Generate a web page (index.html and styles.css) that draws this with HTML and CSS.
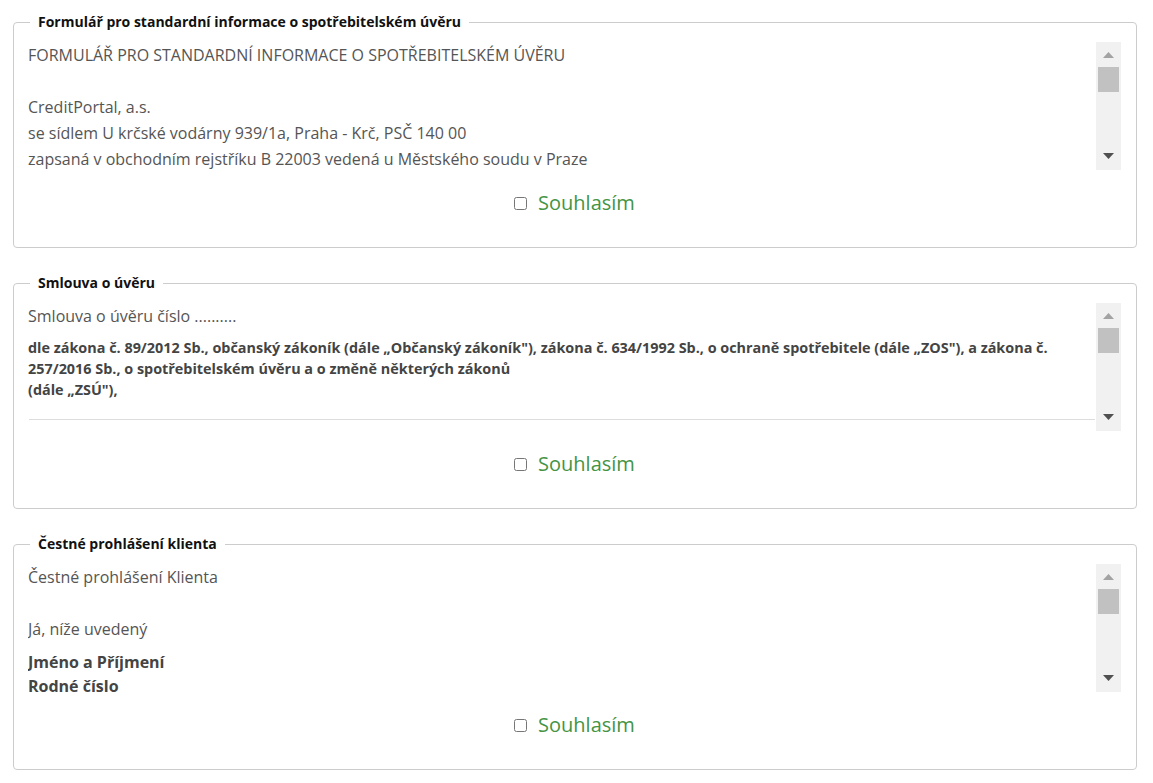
FILE: index.html
```html
<!DOCTYPE html>
<html lang="cs">
<head>
<meta charset="utf-8">
<title>Souhlasy</title>
<link rel="stylesheet" href="styles.css">
</head>
<body>
<main class="page">
  <fieldset class="consent">
    <legend class="consent__title">Formulář pro standardní informace o spotřebitelském úvěru</legend>
    <div class="doc">
      <div class="doc__text">
        <p>FORMULÁŘ PRO STANDARDNÍ INFORMACE O SPOTŘEBITELSKÉM ÚVĚRU</p>
        <p class="blank"></p>
        <p>CreditPortal, a.s.<br>se sídlem U krčské vodárny 939/1a, Praha - Krč, PSČ 140 00<br>zapsaná v obchodním rejstříku B 22003 vedená u Městského soudu v Praze</p>
      </div>
      <div class="scrollbar" aria-hidden="true">
        <span class="scrollbar__btn scrollbar__btn--up"><svg width="11" height="6" viewBox="0 0 11 6"><polygon points="0,6 11,6 5.5,0"/></svg></span>
        <span class="scrollbar__track"><span class="scrollbar__thumb"></span></span>
        <span class="scrollbar__btn scrollbar__btn--down"><svg width="11" height="6" viewBox="0 0 11 6"><polygon points="0,0 11,0 5.5,6"/></svg></span>
      </div>
    </div>
    <label class="agree"><input type="checkbox" class="agree__box"><span class="agree__label">Souhlasím</span></label>
  </fieldset>

  <fieldset class="consent">
    <legend class="consent__title">Smlouva o úvěru</legend>
    <div class="doc">
      <div class="doc__text">
        <p>Smlouva o úvěru číslo ..........</p>
        <p class="doc__law">dle zákona č. 89/2012 Sb., občanský zákoník (dále „Občanský zákoník"), zákona č. 634/1992 Sb., o ochraně spotřebitele (dále „ZOS"), a zákona č. 257/2016 Sb., o spotřebitelském úvěru a o změně některých zákonů<br>(dále „ZSÚ"),</p>
        <hr class="doc__rule">
      </div>
      <div class="scrollbar" aria-hidden="true">
        <span class="scrollbar__btn scrollbar__btn--up"><svg width="11" height="6" viewBox="0 0 11 6"><polygon points="0,6 11,6 5.5,0"/></svg></span>
        <span class="scrollbar__track"><span class="scrollbar__thumb"></span></span>
        <span class="scrollbar__btn scrollbar__btn--down"><svg width="11" height="6" viewBox="0 0 11 6"><polygon points="0,0 11,0 5.5,6"/></svg></span>
      </div>
    </div>
    <label class="agree"><input type="checkbox" class="agree__box"><span class="agree__label">Souhlasím</span></label>
  </fieldset>

  <fieldset class="consent">
    <legend class="consent__title">Čestné prohlášení klienta</legend>
    <div class="doc">
      <div class="doc__text">
        <p>Čestné prohlášení Klienta</p>
        <p class="blank"></p>
        <p>Já, níže uvedený</p>
        <p class="doc__strong">Jméno a Příjmení<br>Rodné číslo</p>
      </div>
      <div class="scrollbar" aria-hidden="true">
        <span class="scrollbar__btn scrollbar__btn--up"><svg width="11" height="6" viewBox="0 0 11 6"><polygon points="0,6 11,6 5.5,0"/></svg></span>
        <span class="scrollbar__track"><span class="scrollbar__thumb"></span></span>
        <span class="scrollbar__btn scrollbar__btn--down"><svg width="11" height="6" viewBox="0 0 11 6"><polygon points="0,0 11,0 5.5,6"/></svg></span>
      </div>
    </div>
    <label class="agree"><input type="checkbox" class="agree__box"><span class="agree__label">Souhlasím</span></label>
  </fieldset>
</main>
</body>
</html>
```

FILE: styles.css
```css
html, body {
  margin: 0;
  padding: 0;
  background: #fff;
}

body {
  font-family: "Open Sans", "DejaVu Sans", sans-serif;
  color: #555;
}

.page {
  padding: 13px 16px 0 13px;
  display: flex;
  flex-direction: column;
  gap: 26px;
}

.consent {
  margin: 0;
  padding: 11px 15px 29px 14px;
  border: 1px solid #ccc;
  border-radius: 4px;
  min-width: 0;
}

.consent__title {
  margin-left: 2px;
  padding: 0 8px;
  font-size: 14px;
  line-height: 18px;
  font-weight: 700;
  color: #111;
}

.doc {
  display: flex;
  height: 128px;
}

.doc__text {
  flex: 1;
  min-width: 0;
  overflow: hidden;
  font-size: 16px;
  line-height: 26px;
}

.doc__text p {
  margin: 0;
}

.doc__text .blank {
  height: 26px;
}

.doc__text .doc__law {
  margin-top: 8px;
  font-size: 14.4px;
  line-height: 21px;
  font-weight: 700;
  color: #444;
}

.doc__rule {
  margin: 19px 1px 0 1px;
  border: 0;
  border-top: 1px solid #ddd;
  height: 0;
}

.doc__text .doc__strong {
  margin-top: 8px;
  font-weight: 700;
  line-height: 24px;
  color: #444;
}

.scrollbar {
  width: 25px;
  flex: none;
  display: flex;
  flex-direction: column;
  background: #f1f1f1;
}

.scrollbar__btn {
  height: 25px;
  display: flex;
  align-items: center;
  justify-content: center;
}

.scrollbar__btn svg {
  display: block;
}

.scrollbar__btn--up svg {
  fill: #a3a3a3;
}

.scrollbar__btn--down svg {
  fill: #505050;
  margin-top: -3px;
}

.scrollbar__track {
  flex: 1;
  padding: 0 2px;
}

.scrollbar__thumb {
  display: block;
  height: 25px;
  background: #c1c1c1;
}

.agree {
  margin-top: 18px;
  height: 30px;
  display: flex;
  align-items: center;
  justify-content: center;
  gap: 11px;
  cursor: pointer;
}

.agree__box {
  margin: 0;
  width: 13px;
  height: 13px;
}

.agree__label {
  font-size: 20px;
  line-height: 30px;
  color: #449444;
}
```
